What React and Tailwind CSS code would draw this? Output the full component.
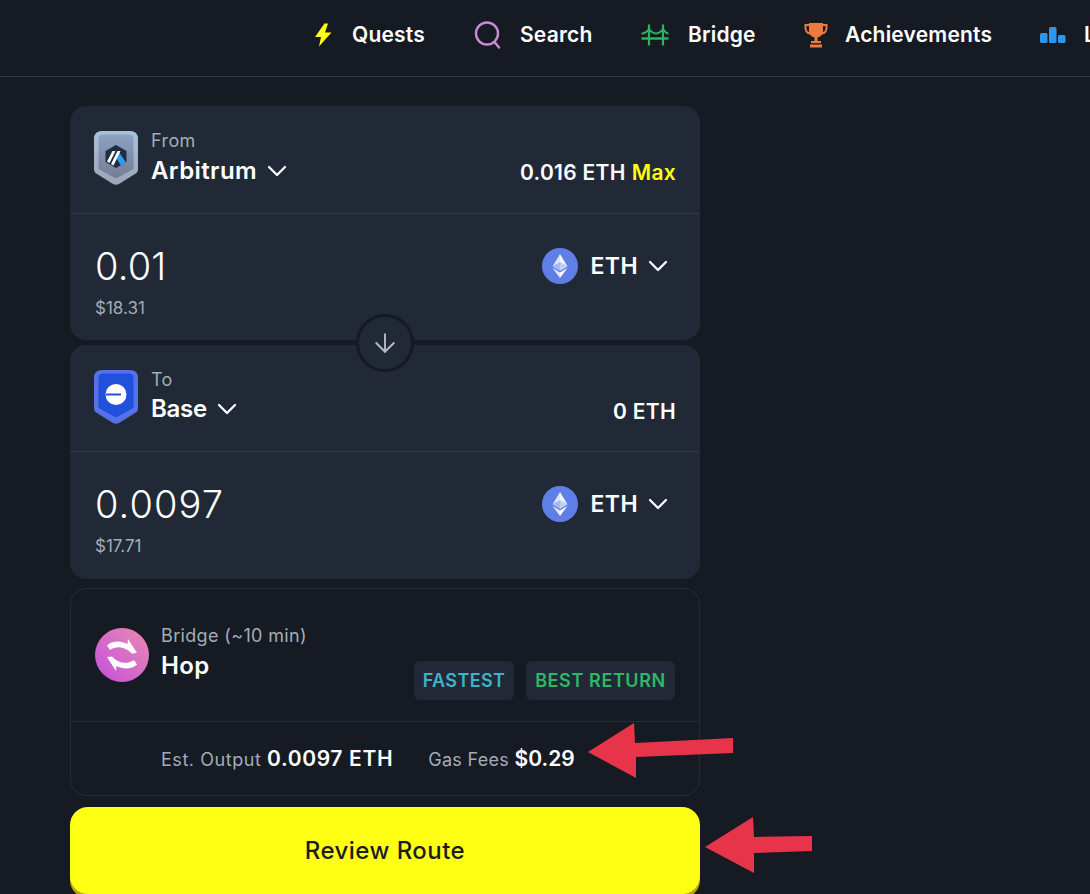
import { ArrowDown } from 'lucide-react'

function Chevron({ className }) {
  return (
    <svg width="20" height="12" viewBox="0 0 20 12" fill="none" stroke="#fff" strokeWidth="2.3" strokeLinecap="round" strokeLinejoin="round" className={`shrink-0 ${className || ''}`}>
      <path d="M2 2 L10 10 L18 2" />
    </svg>
  )
}

function Bolt() {
  return (
    <svg width="18" height="24" viewBox="0 0 18 24" className="shrink-0">
      <path d="M10.500 0.500 L1 14 H7 L5 23.500 L17.500 9.500 H11 L14 0.500 Z" fill="#ffff14" />
    </svg>
  )
}

function SearchIcon() {
  return (
    <svg width="28" height="28" viewBox="0 0 28 28" fill="none" stroke="#c98bd6" strokeWidth="2.4" className="shrink-0">
      <ellipse cx="13" cy="12.500" rx="11" ry="11" />
      <path d="M20.500 21 L25 26.500" strokeLinecap="round" />
    </svg>
  )
}

function BridgeIcon() {
  return (
    <svg width="28" height="24" viewBox="0 0 28 24" fill="none" stroke="#2fb35f" className="shrink-0">
      <path d="M8 1.500 V22.500 M22 1.500 V22.500" strokeWidth="2.200" />
      <path d="M0.500 15.500 H27.500" strokeWidth="2.400" />
      <path d="M0.500 10.500 Q5 10.500 8 6 Q15 15 22 6 Q25 10.500 27.500 10.500" strokeWidth="2" />
    </svg>
  )
}

function TrophyIcon() {
  return (
    <svg width="24" height="26" viewBox="0 0 24 26" className="shrink-0">
      <path d="M5 1 H19 V9 C19 13 16 15.500 12 15.500 C8 15.500 5 13 5 9 Z" fill="#ed7a3f" />
      <path d="M5 3 H1.500 V6 C1.500 9 3.500 11 6 11.500 M19 3 H22.500 V6 C22.500 9 20.500 11 18 11.500" fill="none" stroke="#ed7a3f" strokeWidth="2" />
      <rect x="10.500" y="15" width="3" height="4" fill="#ed7a3f" />
      <rect x="7" y="19" width="10" height="2.200" fill="#ed7a3f" />
      <rect x="6" y="22.500" width="12" height="3" fill="#ed7a3f" />
    </svg>
  )
}

function BarsIcon() {
  return (
    <svg width="26" height="18" viewBox="0 0 26 18" fill="#2f95e8" className="shrink-0">
      <rect x="0" y="7" width="7.500" height="10" rx="1.500" />
      <rect x="9" y="1" width="7.500" height="16" rx="1.500" />
      <rect x="18" y="9" width="7.500" height="8" rx="1.500" />
    </svg>
  )
}

function NavItem({ icon, label, className }) {
  return (
    <div className={`flex items-center shrink-0 ${className}`}>
      {icon}
      <span className="text-[21px] font-semibold tracking-[0.2px] text-white whitespace-nowrap">{label}</span>
    </div>
  )
}

const SHIELD_OUTER = 'M8 0 H36 Q44 0 44 8 V38 Q44 41.500 41 43 L25 53 Q22 54.500 19 53 L3 43 Q0 41.500 0 38 V8 Q0 0 8 0 Z'
const SHIELD_INNER = 'M9 3.500 H35 Q39.500 3.500 39.500 8 V38 L22 47.500 L4.500 38 V8 Q4.500 3.500 9 3.500 Z'

function ArbitrumShield() {
  return (
    <svg width="44" height="54" viewBox="0 0 44 54" className="shrink-0">
      <defs>
        <linearGradient id="arbEdge" x1="0" y1="0" x2="0" y2="1">
          <stop offset="0" stopColor="#a9c1dc" />
          <stop offset="1" stopColor="#9ea3b6" />
        </linearGradient>
        <linearGradient id="arbFace" x1="0" y1="0" x2="0" y2="1">
          <stop offset="0" stopColor="#8ba2c0" />
          <stop offset="1" stopColor="#767d96" />
        </linearGradient>
      </defs>
      <path d={SHIELD_OUTER} fill="url(#arbEdge)" />
      <path d={SHIELD_INNER} fill="url(#arbFace)" />
      <path d="M22 14 L32.500 20 V31 L22 37 L11.500 31 V20 Z" fill="#1f2c42" />
      <path d="M24.500 20.500 L32 31.500 L27 34.500 L21.500 26 Z" fill="#2d9fe6" />
      <path d="M18.500 20 H21.500 L15.500 32 L13 30.500 Z M23.500 20 H26.500 L19.500 34.500 L17 33 Z" fill="#fff" />
    </svg>
  )
}

function BaseShield() {
  return (
    <svg width="44" height="54" viewBox="0 0 44 54" className="shrink-0">
      <path d={SHIELD_OUTER} fill="#5672e8" />
      <path d={SHIELD_INNER} fill="#2150dc" />
      <circle cx="22" cy="24.500" r="10.500" fill="#fff" />
      <rect x="12" y="23.500" width="15" height="2" fill="#2150dc" />
    </svg>
  )
}

function EthIcon() {
  return (
    <svg width="36" height="36" viewBox="0 0 36 36" className="shrink-0">
      <circle cx="18" cy="18" r="18" fill="#5f7fe6" />
      <path d="M18 6 V14.500 L10.500 18.500 Z" fill="#dfe6fb" />
      <path d="M18 6 V14.500 L25.500 18.500 Z" fill="#f4f6fe" />
      <path d="M18 14.500 L10.500 18.500 L18 23 Z" fill="#a9b9f2" />
      <path d="M18 14.500 L25.500 18.500 L18 23 Z" fill="#c3cff6" />
      <path d="M10.500 20 L18 24.500 V30 Z" fill="#e6ebfc" />
      <path d="M25.500 20 L18 24.500 V30 Z" fill="#ffffff" />
    </svg>
  )
}

function HopIcon() {
  const band = 'M12 17.500 C17 12.500 26 12.500 32.500 16 L33 11 L42 25 L37 25.500 C31 19 22 17 15 22 Z'
  return (
    <svg width="54" height="54" viewBox="0 0 54 54" className="shrink-0">
      <defs>
        <linearGradient id="hopBg" x1="1" y1="0" x2="0" y2="1">
          <stop offset="0" stopColor="#e98bb0" />
          <stop offset="1" stopColor="#c34fdc" />
        </linearGradient>
      </defs>
      <circle cx="27" cy="27" r="27" fill="url(#hopBg)" />
      <path d={band} fill="#fff" />
      <path d={band} fill="#fff" transform="rotate(180 27 27)" />
    </svg>
  )
}

function ChainCard({ label, chain, shield, balance, amount, usd, showMax, topClass, chainClass, balanceClass, amountClass }) {
  return (
    <div className="bg-[#212936] rounded-[16px] h-[234px] flex flex-col">
      <div className={`shrink-0 border-b border-[#323a48] pl-6 pr-6 pt-[25px] flex justify-between ${topClass}`}>
        <div className="flex gap-[13px]">
          {shield}
          <div className="flex flex-col">
            <span className="text-[18px] leading-[20px] tracking-[0.4px] text-[#a3acb9]">{label}</span>
            <div className={`flex items-center gap-[10px] ${chainClass}`}>
              <span className="text-[24px] leading-[28px] font-semibold text-white">{chain}</span>
              <Chevron />
            </div>
          </div>
        </div>
        <div className={`self-end text-[21px] leading-[24px] tracking-[0.3px] font-semibold text-white ${balanceClass}`}>
          {balance}
          {showMax && <span className="text-[#ffff14] ml-[6px]">Max</span>}
        </div>
      </div>
      <div className="flex-1 pl-[25px] pr-[32px] flex justify-between">
        <div className="flex flex-col pt-[32px]">
          <span className={`text-[38px] leading-[40px] font-light text-white ${amountClass}`}>{amount}</span>
          <span className="text-[17px] leading-[20px] mt-[12px] text-[#a3acb9]">{usd}</span>
        </div>
        <div className="flex items-center gap-[13px] h-[36px] mt-[34px]">
          <EthIcon />
          <span className="text-[23px] tracking-[0.4px] font-semibold text-white">ETH</span>
          <Chevron className="-ml-[3px]" />
        </div>
      </div>
    </div>
  )
}

function Badge({ className, children }) {
  return (
    <span className={`h-[39px] rounded-[6px] bg-[#212936] flex items-center justify-center text-[18px] font-semibold ${className}`}>
      {children}
    </span>
  )
}

export default function App() {
  return (
    <div className="relative w-[1090px] h-[894px] overflow-hidden bg-[#161a22] font-['Inter',sans-serif]">
      <header className="h-[77px] border-b border-[#343a45] flex items-center pl-[314px] pb-[6px]">
        <NavItem icon={<Bolt />} label="Quests" className="gap-[20px] w-[160px]" />
        <NavItem icon={<SearchIcon />} label="Search" className="gap-[18px] w-[167px]" />
        <NavItem icon={<BridgeIcon />} label="Bridge" className="gap-[19px] w-[163px]" />
        <NavItem icon={<TrophyIcon />} label="Achievements" className="gap-[17px] w-[236px]" />
        <NavItem icon={<BarsIcon />} label="Leaderboard" className="gap-[18px]" />
      </header>

      <main className="w-[630px] ml-[70px] pt-[29px]">
        <ChainCard
          label="From"
          chain="Arbitrum"
          shield={<ArbitrumShield />}
          balance="0.016 ETH"
          showMax
          amount="0.01"
          usd="$18.31"
          topClass="h-[108px]"
          chainClass="mt-[6px] tracking-[0.4px]"
          balanceClass="pb-[28px]"
          amountClass="tracking-[0.2px]"
        />
        <div className="relative h-[5px]">
          <div className="absolute left-[286px] -top-[26px] w-[58px] h-[58px] rounded-full bg-[#212936] border-[3px] border-[#161a22] flex items-center justify-center">
            <ArrowDown size={30} strokeWidth={1.5} color="#b6bcc8" />
          </div>
        </div>
        <ChainCard
          label="To"
          chain="Base"
          shield={<BaseShield />}
          balance="0 ETH"
          amount="0.0097"
          usd="$17.71"
          topClass="h-[107px]"
          chainClass="mt-[5px] tracking-[-0.3px]"
          balanceClass="pb-[27px]"
          amountClass="tracking-[1.1px]"
        />

        <section className="mt-[9px] h-[208px] rounded-[16px] border border-[#262c37] flex flex-col">
          <div className="h-[133px] shrink-0 border-b border-[#262c37] pl-6 pr-6 pt-[39px] flex justify-between">
            <div className="flex gap-[12px]">
              <HopIcon />
              <div className="flex flex-col -mt-[2px]">
                <span className="text-[18px] leading-[20px] tracking-[0.35px] text-[#a3acb9]">Bridge (~10 min)</span>
                <span className="text-[24px] leading-[28px] tracking-[0.4px] mt-[6px] font-semibold text-white">Hop</span>
              </div>
            </div>
            <div className="flex gap-3 self-end pb-[21px]">
              <Badge className="w-[100px] text-[#3fb2c9] tracking-[0.4px]">FASTEST</Badge>
              <Badge className="w-[149px] text-[#2cb866] tracking-[0.6px]">BEST RETURN</Badge>
            </div>
          </div>
          <div className="flex-1 pl-[90px] flex items-center gap-[35px]">
            <span className="text-[#a3acb9] text-[18px] tracking-[0.55px]">
              Est. Output <span className="text-white font-semibold text-[21px] tracking-[0.65px]">0.0097 ETH</span>
            </span>
            <span className="text-[#a3acb9] text-[18px] tracking-[0.3px]">
              Gas Fees <span className="text-white font-semibold text-[21px] tracking-[0px]">$0.29</span>
            </span>
          </div>
        </section>

        <button className="mt-[11px] w-full h-[87px] rounded-[18px] bg-[#ffff14] shadow-[0_4px_0_#b8a80c] flex items-center justify-center text-[24px] tracking-[0.45px] font-medium text-[#1b1d1f] pt-[1px]">
          Review Route
        </button>
      </main>

      <svg width="146" height="57" viewBox="0 0 146 57" className="absolute left-[588px] top-[722px]">
        <path d="M0 30 L46 1 L47 21 L145 16 V31 L48 35 V56 Z" fill="#e8344a" />
      </svg>
      <svg width="107" height="57" viewBox="0 0 107 57" className="absolute left-[705px] top-[817px]">
        <path d="M0 30 L48 0 L49 20 L107 19 V34 L49 36 V56 Z" fill="#e8344a" />
      </svg>
    </div>
  )
}
